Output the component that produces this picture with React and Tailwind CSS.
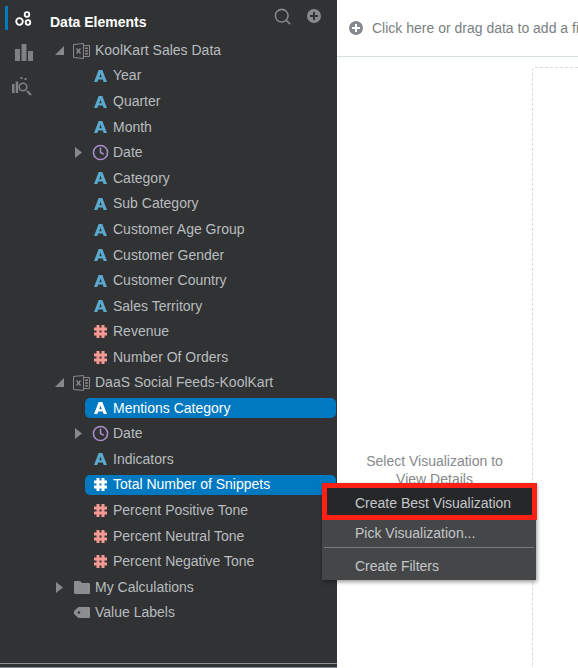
import { Clock, Search } from "lucide-react";

function AttrIcon({ white }) {
  return (
    <svg width="13" height="12" viewBox="0 0 14 13" className={white ? "text-white" : "text-[#5ba9cf]"}>
      <path fill="currentColor" fillRule="evenodd" d="M5 0h4l5 13h-3.600l-.9-2.600H4.500L3.600 13H0zM7 3.800 5.700 7.800h2.600z" />
    </svg>
  );
}

function HashIcon({ white }) {
  return (
    <svg width="13" height="13" viewBox="0 0 13 13" className={white ? "text-white" : "text-[#f49a93]"}>
      <path
        fill="currentColor"
        d="M2.500 0h3v13h-3zM7.500 0h3v13h-3zM0 2.500h13v3H0zM0 7.500h13v3H0z"
      />
    </svg>
  );
}

function Caret({ open }) {
  if (open) {
    return (
      <svg width="9" height="9" viewBox="0 0 9 9" className="text-[#85898c]">
        <path fill="currentColor" d="M9 0v9H0z" />
      </svg>
    );
  }
  return (
    <svg width="7" height="11" viewBox="0 0 7 11" className="text-[#85898c]">
      <path fill="currentColor" d="M0 0l7 5.500-7 5.500z" />
    </svg>
  );
}

function ExcelIcon() {
  return (
    <svg width="17" height="16" viewBox="0 0 17 16" className="text-[#85898c]">
      <path fill="none" stroke="currentColor" d="M.5 1.500 10.500.5v15l-10-1zM10.500 2.500h6v11h-6" />
      <path fill="currentColor" d="M12 4.500h3v1.500h-3zM12 7.300h3v1.500h-3zM12 10h3v1.500h-3z" />
      <path fill="none" stroke="currentColor" strokeWidth="1.400" d="M3.500 5.500l4 5M7.500 5.500l-4 5" />
    </svg>
  );
}

function FolderIcon() {
  return (
    <svg width="16" height="13" viewBox="0 0 16 13" className="text-[#8a8e91]">
      <path fill="currentColor" d="M0 1a1 1 0 0 1 1-1h5l2 2h7a1 1 0 0 1 1 1v9a1 1 0 0 1-1 1H1a1 1 0 0 1-1-1z" />
    </svg>
  );
}

function TagIcon() {
  return (
    <svg width="16" height="11" viewBox="0 0 16 11" className="text-[#8a8e91]">
      <path
        fill="currentColor"
        fillRule="evenodd"
        d="M4.500 0H15a1 1 0 0 1 1 1v9a1 1 0 0 1-1 1H4.500L0 7V4zM5 4.200a1.300 1.300 0 1 0 0 2.600 1.300 1.300 0 0 0 0-2.600z"
      />
    </svg>
  );
}

function PlusCircle() {
  return (
    <svg width="14" height="14" viewBox="0 0 14 14" className="shrink-0 text-[#85898c]">
      <path
        fill="currentColor"
        fillRule="evenodd"
        d="M7 0a7 7 0 1 1 0 14A7 7 0 0 1 7 0zM6 3v3H3v2h3v3h2V8h3V6H8V3z"
      />
    </svg>
  );
}

const icons = {
  attr: <AttrIcon />,
  attrOn: <AttrIcon white />,
  num: <HashIcon />,
  numOn: <HashIcon white />,
  time: <Clock size={17} strokeWidth={2.2} className="shrink-0 text-[#a78fc9]" />,
};

const rows = [
  { group: "KoolKart Sales Data", icon: <ExcelIcon />, open: true },
  { label: "Year", icon: "attr" },
  { label: "Quarter", icon: "attr" },
  { label: "Month", icon: "attr" },
  { label: "Date", icon: "time", closed: true },
  { label: "Category", icon: "attr" },
  { label: "Sub Category", icon: "attr" },
  { label: "Customer Age Group", icon: "attr" },
  { label: "Customer Gender", icon: "attr" },
  { label: "Customer Country", icon: "attr" },
  { label: "Sales Territory", icon: "attr" },
  { label: "Revenue", icon: "num" },
  { label: "Number Of Orders", icon: "num" },
  { group: "DaaS Social Feeds-KoolKart", icon: <ExcelIcon />, open: true },
  { label: "Mentions Category", icon: "attrOn", active: true },
  { label: "Date", icon: "time", closed: true },
  { label: "Indicators", icon: "attr" },
  { label: "Total Number of Snippets", icon: "numOn", active: true },
  { label: "Percent Positive Tone", icon: "num" },
  { label: "Percent Neutral Tone", icon: "num" },
  { label: "Percent Negative Tone", icon: "num" },
  { group: "My Calculations", icon: <FolderIcon />, closed: true },
  { group: "Value Labels", icon: <TagIcon /> },
];

function Row({ row }) {
  if (row.group) {
    return (
      <div className={`${row.open ? "h-[25px]" : "h-[25.6px]"} flex items-center pl-[13px] text-[#b9bcbe]`}>
        <div className="w-[20px] flex justify-center items-center">
          {row.open && <Caret open />}
          {row.closed && <Caret />}
        </div>
        <div className="w-[17px] ml-[4px] mr-[5px] flex justify-center">{row.icon}</div>
        <span className="whitespace-nowrap">{row.group}</span>
      </div>
    );
  }
  return (
    <div className="h-[25.6px] flex items-center pl-[23px] pr-[1px]">
      <div className="w-[26px] pr-[3px] flex justify-end items-center">{row.closed && <Caret />}</div>
      <div
        className={`flex-1 h-[20px] flex items-center pl-[8px] rounded-[5px] ${
          row.active ? "bg-[#0079c1] text-white" : "text-[#b9bcbe]"
        }`}
      >
        <div className="w-[14px] mr-[6px] flex justify-center">{icons[row.icon]}</div>
        <span className="whitespace-nowrap">{row.label}</span>
      </div>
    </div>
  );
}

export default function App() {
  return (
    <div className="relative h-[668px] w-[578px] overflow-hidden bg-white flex text-[14px] font-['Liberation_Sans',Arial,sans-serif]">
      {/* Left rail */}
      <div className="w-[36px] shrink-0 h-full bg-[#303234] flex flex-col items-center">
        <div className="relative mt-[8px] h-[22px] w-full flex justify-center items-center">
          <div className="absolute left-[5px] top-[-2px] h-[24px] w-[3px] bg-[#0079c1]" />
          <svg width="17" height="16" viewBox="0 0 17 16" className="ml-[11px] text-white" fill="none" stroke="currentColor" strokeWidth="1.8">
            <circle cx="4.500" cy="10.500" r="3.300" />
            <circle cx="12" cy="3.500" r="2.300" />
            <circle cx="13" cy="11.500" r="2.300" />
          </svg>
        </div>
        <svg width="18" height="17" viewBox="0 0 18 17" className="mt-[14px] ml-[11px] text-[#7d8184]">
          <path fill="currentColor" d="M0 5h5v12H0zM6.500 0h5v17h-5zM13 7h5v10h-5z" />
        </svg>
        <svg width="21" height="20" viewBox="0 0 21 20" className="mt-[16px] ml-[9px] text-[#7d8184]">
          <path fill="currentColor" d="M0 7h2.500v9H0zM3.700 4.500h2.500V16H3.700zM8.500 0h2v2h-2zM12.500 1h2v2h-2z" />
          <circle cx="11" cy="10" r="3.800" fill="none" stroke="currentColor" strokeWidth="1.6" />
          <path stroke="currentColor" strokeWidth="2.2" d="M15 14l4 4" />
        </svg>
      </div>

      {/* Data panel */}
      <div className="w-[301px] shrink-0 h-full bg-[#303234]">
        <div className="h-[38.2px] flex items-center pt-[6px] pl-[14px] pr-[16px] justify-between">
          <span className="font-bold text-white">Data Elements</span>
          <div className="flex items-center gap-[15px] mt-[-12px]">
            <Search size={19} strokeWidth={2} className="text-[#85898c]" />
            <PlusCircle />
          </div>
        </div>
        {rows.map((row, i) => (
          <Row key={i} row={row} />
        ))}
      </div>

      {/* Canvas */}
      <div className="flex-1 min-w-0 flex flex-col">
        <div className="h-[57px] shrink-0 border-b border-[#d5e0e5] flex items-center pl-[12px] text-[#7b7f82] whitespace-nowrap">
          <PlusCircle />
          <span className="ml-[9px]">Click here or drag data to add a filter</span>
        </div>
        <div className="flex-1 relative">
          <div className="absolute left-[195px] top-[10px] w-[120px] h-[700px] border border-dashed border-[#d9d9d9] rounded-[3px]" />
          <div className="absolute left-[20px] top-[395px] w-[155px] text-center text-[#85898c] leading-[18px]">
            Select Visualization to View Details
          </div>
        </div>
      </div>

      {/* Panel bottom lines */}
      <div className="absolute left-0 top-[663px] w-[337px] h-[1px] bg-[#8f9193]" />
      <div className="absolute left-0 top-[667px] w-[337px] h-[1px] bg-[#7f8a94]" />

      {/* Context menu */}
      <div className="absolute left-[322px] top-[483px] w-[214px] bg-[#454648] text-[#c4c6c8] shadow-[1px_2px_4px_rgba(0,0,0,0.4)]">
        <div className="w-[215px] h-[37px] border-[5px] border-[#fc2114] bg-[#262729] flex items-center pl-[28px] pt-[3px]">
          Create Best Visualization
        </div>
        <div className="h-[27px] flex items-center pl-[33px]">Pick Visualization...</div>
        <div className="mx-[2px] h-[1px] bg-[#77797b]" />
        <div className="h-[32px] flex items-center pl-[33px] pt-[4px]">Create Filters</div>
      </div>
    </div>
  );
}
